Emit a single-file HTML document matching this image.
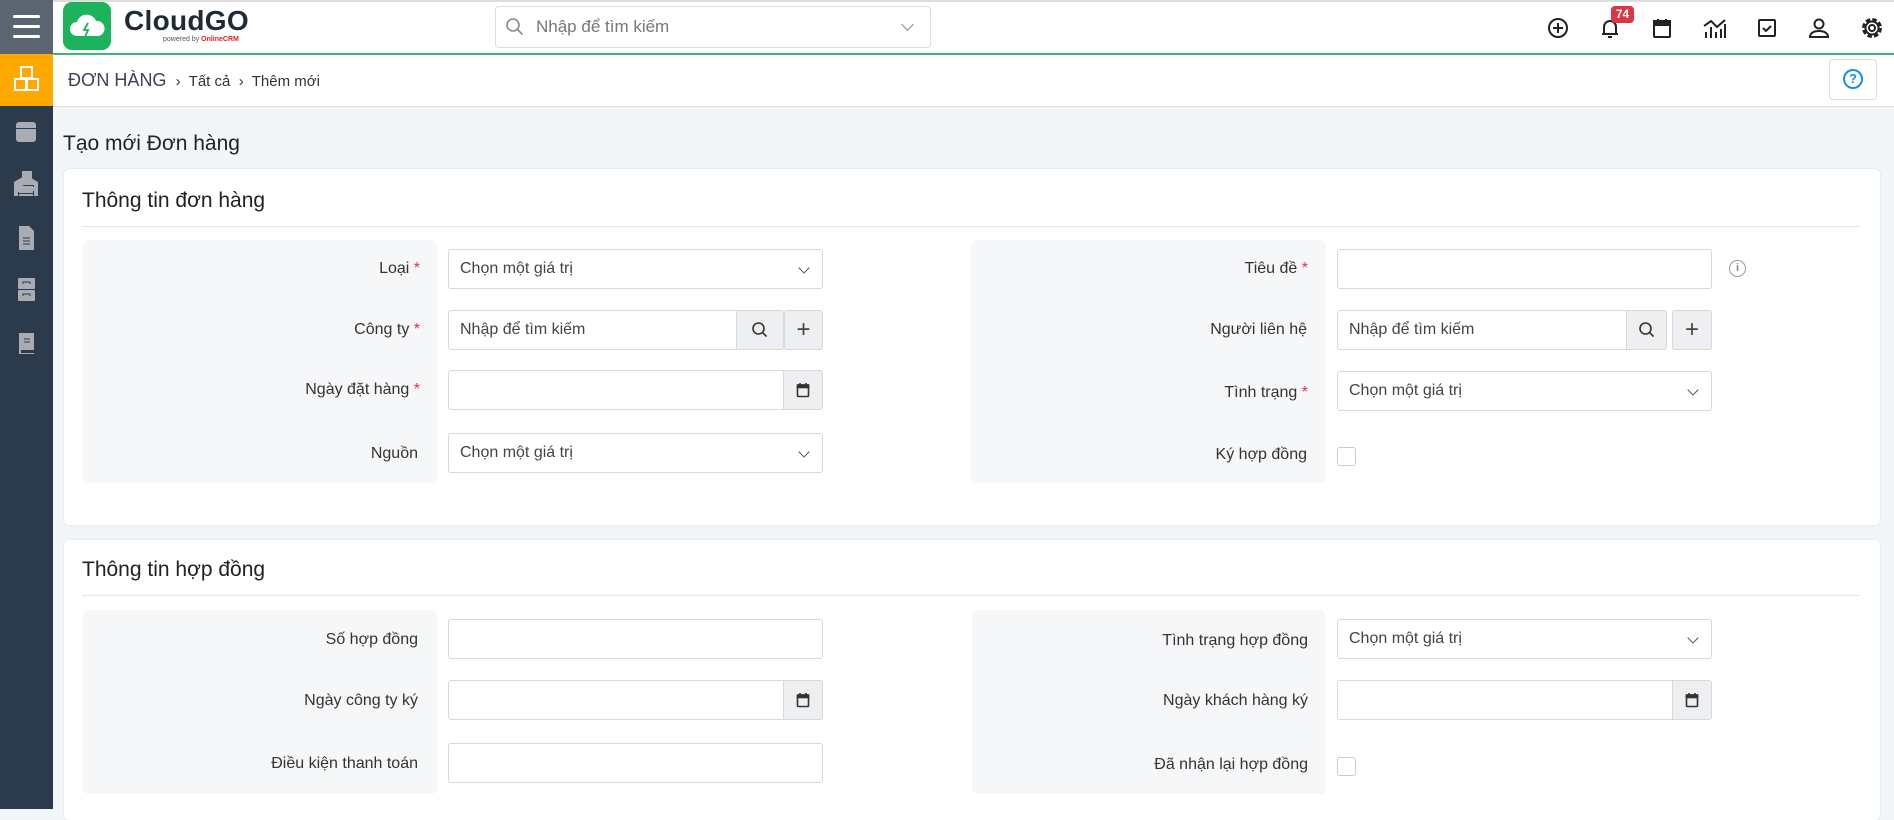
<!DOCTYPE html>
<html><head><meta charset="utf-8"><style>
*{box-sizing:border-box;margin:0;padding:0}
body{width:1894px;height:809px;overflow:hidden;background:#f3f6f9;font-family:"Liberation Sans",sans-serif;color:#333;position:relative}
.abs{position:absolute}
.side{left:0;top:0;width:53px;height:809px;background:#2c3b4b}
.topbar{left:53px;top:0;width:1841px;height:55px;background:#fff;border-top:2px solid #ddd;border-bottom:2px solid #3cb878}
.crumb{left:53px;top:55px;width:1841px;height:52px;background:#fff;border-bottom:1px solid #ddd}
.card{background:#fff;border-radius:5px;box-shadow:0 0 2px rgba(0,0,0,.12)}
.panel{background:#f6f7f9;border-radius:6px}
.lbl{font-size:16px;color:#333;text-align:right;width:300px}
.lbl i{color:#e0334a;font-style:normal}
.inp{border:1px solid #d6d9dd;border-radius:3px;background:#fff;height:40px;font-size:16px;color:#444;padding:0 11px;line-height:38px}
.addon{background:#eeeff1;border:1px solid #d6d9dd;height:40px;display:flex;align-items:center;justify-content:center}
.chev{position:absolute;right:14px;top:14px;width:8px;height:8px;border-right:1.5px solid #555;border-bottom:1.5px solid #555;transform:rotate(45deg)}
.sico{position:absolute;left:13px;width:26px;height:26px}
</style></head><body>
<div class="abs side"></div>
<div class="abs" style="left:0;top:0;width:53px;height:54px;background:#5a6571"></div>
<div class="abs" style="left:13px;top:15px;width:27px;height:3px;background:#fff;border-radius:2px"></div>
<div class="abs" style="left:13px;top:25px;width:27px;height:3px;background:#fff;border-radius:2px"></div>
<div class="abs" style="left:13px;top:35px;width:27px;height:3px;background:#fff;border-radius:2px"></div>
<div class="abs" style="left:0;top:54px;width:53px;height:52px;background:#ffa800"></div>
<svg class="abs" style="left:11px;top:64px" width="32" height="32" viewBox="0 0 32 32" fill="none" stroke="#fff" stroke-width="2"><rect x="10" y="3" width="11" height="11"/><rect x="4" y="15" width="11" height="11"/><rect x="16" y="15" width="11" height="11"/></svg>
<svg class="sico" style="top:119px" viewBox="0 0 26 26"><rect x="3" y="3" width="20" height="20" rx="3" fill="#a9acb2"/><rect x="3" y="9" width="20" height="1" fill="#2c3b4b"/></svg>
<svg class="sico" style="top:169px" viewBox="0 0 26 26"><rect x="9" y="2" width="10" height="10" fill="#a9acb2"/><path d="M2 16h7l4 2h7l5-3v3l-6 5H2z" fill="#a9acb2"/></svg>
<svg class="sico" style="top:172px" viewBox="0 0 26 26"><path d="M1 10l12-7 12 7v14h-4V13H5v11H1z" fill="#a9acb2"/><rect x="6" y="14" width="14" height="3" fill="#a9acb2"/><rect x="6" y="18" width="14" height="3" fill="#a9acb2"/><rect x="6" y="22" width="14" height="2" fill="#a9acb2"/></svg>
<svg class="sico" style="top:225px" viewBox="0 0 26 26"><path d="M6 1h10l5 5v19H6z" fill="#a9acb2"/><path d="M10 13h7M10 16h7M10 19h7" stroke="#2c3b4b"/></svg>
<svg class="sico" style="top:277px" viewBox="0 0 26 26"><rect x="5" y="1" width="17" height="11" rx="1" fill="#a9acb2"/><rect x="5" y="13" width="17" height="11" rx="1" fill="#a9acb2"/><path d="M10 7V5h7v2M10 19v-2h7v2" stroke="#2c3b4b" fill="none"/></svg>
<svg class="sico" style="top:330px" viewBox="0 0 26 26"><path d="M6 3h15v17H8v3h13v1H6z" fill="#a9acb2"/><path d="M11 9h6M11 12h6" stroke="#2c3b4b"/></svg>

<div class="abs topbar"></div>
<div class="abs" style="left:63px;top:2px;width:48px;height:48px;background:#1db35c;border-radius:9px"></div>
<svg class="abs" style="left:68px;top:12px" width="38" height="28" viewBox="0 0 38 28"><path d="M9 24a7 7 0 0 1 0-14a10 10 0 0 1 19-1a7 7 0 0 1 2 15z" fill="#fff"/><path d="M20 11l-4 7h4l-3 7" stroke="#1db35c" stroke-width="1.8" fill="none"/></svg>
<div class="abs" style="left:124px;top:5px;font-size:28px;font-weight:bold;color:#1f2a37;letter-spacing:0.3px">CloudGO</div>
<div class="abs" style="left:163px;top:36px;font-size:7px;color:#555">powered by <b style="color:#d22">OnlineCRM</b></div>
<div class="abs" style="left:495px;top:6px;width:436px;height:42px;border:1px solid #ddd;border-radius:4px;background:#fff"></div>
<svg class="abs" style="left:505px;top:17px" width="20" height="20" viewBox="0 0 20 20" fill="none" stroke="#888" stroke-width="1.6"><circle cx="8" cy="8" r="6"/><path d="M12.5 12.5l5 5"/></svg>
<div class="abs" style="left:536px;top:17px;font-size:17px;color:#777">Nhập để tìm kiếm</div>
<div class="abs" style="left:903px;top:20px;width:9px;height:9px;border-right:1.6px solid #888;border-bottom:1.6px solid #888;transform:rotate(45deg)"></div>
<svg class="abs" style="left:1546px;top:16px" width="24" height="24" viewBox="0 0 24 24" fill="none" stroke="#222" stroke-width="2"><circle cx="12" cy="12" r="9"/><path d="M12 7v10M7 12h10"/></svg>
<svg class="abs" style="left:1598px;top:16px" width="24" height="24" viewBox="0 0 24 24" fill="none" stroke="#222" stroke-width="2"><path d="M6 18V11a6 6 0 0 1 12 0v7H4h16M10 21h4"/></svg>
<div class="abs" style="left:1611px;top:6px;width:23px;height:17px;background:#dc3545;color:#fff;border-radius:4px;font-size:12px;font-weight:bold;text-align:center;line-height:17px">74</div>
<svg class="abs" style="left:1650px;top:16px" width="24" height="24" viewBox="0 0 24 24" fill="none" stroke="#222" stroke-width="2"><rect x="4" y="5" width="16" height="16" rx="1"/><rect x="4" y="5" width="16" height="4" fill="#222"/><path d="M8 3v3M16 3v3"/></svg>
<svg class="abs" style="left:1702px;top:16px" width="26" height="24" viewBox="0 0 26 24" fill="none" stroke="#222" stroke-width="2"><path d="M2 10l7-5 6 6 8-7M4 22v-6M9 22V11M14 22v-6M19 22V13M23 22V8"/></svg>
<svg class="abs" style="left:1755px;top:16px" width="24" height="24" viewBox="0 0 24 24" fill="none" stroke="#222" stroke-width="2"><rect x="4" y="4" width="16" height="16" rx="1"/><path d="M8 12l3 3 5-5"/></svg>
<svg class="abs" style="left:1807px;top:16px" width="24" height="24" viewBox="0 0 24 24" fill="none" stroke="#222" stroke-width="2"><circle cx="12" cy="8" r="4.5"/><path d="M3 21c0-4 4-6 9-6s9 2 9 6z"/></svg>
<svg class="abs" style="left:1860px;top:16px" width="24" height="24" viewBox="0 0 24 24" fill="none" stroke="#222"><circle cx="12" cy="12" r="8" stroke-width="4" stroke-dasharray="4.2 2.1"/><circle cx="12" cy="12" r="6.5" stroke-width="2" fill="#fff"/><circle cx="12" cy="12" r="3" stroke-width="2"/></svg>

<div class="abs crumb"></div>
<div class="abs" style="left:68px;top:70px;font-size:18px;color:#3a4452">ĐƠN HÀNG <span style="font-size:15px;color:#333">&nbsp;›&nbsp; Tất cả &nbsp;›&nbsp; Thêm mới</span></div>
<div class="abs" style="left:1829px;top:59px;width:48px;height:41px;border:1px solid #ddd;border-radius:4px;background:#fff"></div>
<div class="abs" style="left:1843px;top:69px;width:20px;height:20px;border:2px solid #1d8fe0;border-radius:50%;color:#1d8fe0;font-size:13px;font-weight:bold;text-align:center;line-height:16px">?</div>

<div class="abs" style="left:63px;top:132px;font-size:21px;color:#222">Tạo mới Đơn hàng</div>

<div class="abs card" style="left:64px;top:169px;width:1816px;height:356px"></div>
<div class="abs" style="left:82px;top:189px;font-size:21px;color:#222">Thông tin đơn hàng</div>
<div class="abs" style="left:82px;top:226px;width:1778px;height:1px;background:#e6e6e6"></div>
<div class="abs panel" style="left:83px;top:240px;width:354px;height:243px"></div>
<div class="abs panel" style="left:971px;top:240px;width:355px;height:243px"></div>

<div class="abs card" style="left:64px;top:540px;width:1816px;height:280px"></div>
<div class="abs" style="left:82px;top:558px;font-size:21px;color:#222">Thông tin hợp đồng</div>
<div class="abs" style="left:82px;top:595px;width:1778px;height:1px;background:#e6e6e6"></div>
<div class="abs panel" style="left:83px;top:610px;width:354px;height:184px"></div>
<div class="abs panel" style="left:972px;top:610px;width:354px;height:184px"></div>

<div class="abs lbl" style="left:120px;top:260px">Loại <i>*</i></div>
<div class="abs lbl" style="left:120px;top:321px">Công ty <i>*</i></div>
<div class="abs lbl" style="left:120px;top:381px">Ngày đặt hàng <i>*</i></div>
<div class="abs lbl" style="left:118px;top:445px">Nguồn</div>
<div class="abs inp" style="left:448px;top:249px;width:375px">Chọn một giá trị<span class="chev"></span></div>
<div class="abs inp" style="left:448px;top:310px;width:290px;border-radius:3px 0 0 3px">Nhập để tìm kiếm</div>
<div class="abs addon" style="left:736px;top:310px;width:48px;border-radius:0 3px 3px 0"><svg width="18" height="18" viewBox="0 0 18 18" fill="none" stroke="#333" stroke-width="1.6"><circle cx="7.5" cy="7.5" r="5.5"/><path d="M11.5 11.5l4 4"/></svg></div>
<div class="abs addon" style="left:784px;top:310px;width:39px;border-radius:3px;font-size:24px;color:#444">+</div>
<div class="abs inp" style="left:448px;top:370px;width:336px;border-radius:3px 0 0 3px"></div>
<div class="abs addon" style="left:783px;top:370px;width:40px;border-radius:0 3px 3px 0"><svg width="14" height="16" viewBox="0 0 14 16" fill="none" stroke="#333" stroke-width="1.6"><rect x="1.5" y="3" width="11" height="11.5" rx="1"/><rect x="1.5" y="3" width="11" height="2.5" fill="#333"/><path d="M4 1v3M10 1v3"/></svg></div>
<div class="abs inp" style="left:448px;top:433px;width:375px">Chọn một giá trị<span class="chev"></span></div>

<div class="abs lbl" style="left:1008px;top:260px">Tiêu đề <i>*</i></div>
<div class="abs lbl" style="left:1007px;top:321px">Người liên hệ</div>
<div class="abs lbl" style="left:1008px;top:384px">Tình trạng <i>*</i></div>
<div class="abs lbl" style="left:1007px;top:446px">Ký hợp đồng</div>
<div class="abs inp" style="left:1337px;top:249px;width:375px"></div>
<div class="abs" style="left:1729px;top:260px;width:17px;height:17px;border:1.5px solid #999;border-radius:50%;font-size:11px;color:#888;text-align:center;line-height:14px;font-weight:bold">i</div>
<div class="abs inp" style="left:1337px;top:310px;width:291px;border-radius:3px 0 0 3px">Nhập để tìm kiếm</div>
<div class="abs addon" style="left:1626px;top:310px;width:41px;border-radius:0 3px 3px 0"><svg width="18" height="18" viewBox="0 0 18 18" fill="none" stroke="#333" stroke-width="1.6"><circle cx="7.5" cy="7.5" r="5.5"/><path d="M11.5 11.5l4 4"/></svg></div>
<div class="abs addon" style="left:1672px;top:310px;width:40px;border-radius:3px;font-size:24px;color:#444">+</div>
<div class="abs inp" style="left:1337px;top:371px;width:375px">Chọn một giá trị<span class="chev"></span></div>
<div class="abs" style="left:1337px;top:447px;width:19px;height:19px;border:1px solid #ccc;border-radius:3px;background:#fff"></div>

<div class="abs lbl" style="left:118px;top:631px">Số hợp đồng</div>
<div class="abs lbl" style="left:118px;top:692px">Ngày công ty ký</div>
<div class="abs lbl" style="left:118px;top:755px">Điều kiện thanh toán</div>
<div class="abs inp" style="left:448px;top:619px;width:375px"></div>
<div class="abs inp" style="left:448px;top:680px;width:336px;border-radius:3px 0 0 3px"></div>
<div class="abs addon" style="left:783px;top:680px;width:40px;border-radius:0 3px 3px 0"><svg width="14" height="16" viewBox="0 0 14 16" fill="none" stroke="#333" stroke-width="1.6"><rect x="1.5" y="3" width="11" height="11.5" rx="1"/><rect x="1.5" y="3" width="11" height="2.5" fill="#333"/><path d="M4 1v3M10 1v3"/></svg></div>
<div class="abs inp" style="left:448px;top:743px;width:375px"></div>

<div class="abs lbl" style="left:1008px;top:632px">Tình trạng hợp đồng</div>
<div class="abs lbl" style="left:1008px;top:692px">Ngày khách hàng ký</div>
<div class="abs lbl" style="left:1008px;top:756px">Đã nhận lại hợp đồng</div>
<div class="abs inp" style="left:1337px;top:619px;width:375px">Chọn một giá trị<span class="chev"></span></div>
<div class="abs inp" style="left:1337px;top:680px;width:336px;border-radius:3px 0 0 3px"></div>
<div class="abs addon" style="left:1672px;top:680px;width:40px;border-radius:0 3px 3px 0"><svg width="14" height="16" viewBox="0 0 14 16" fill="none" stroke="#333" stroke-width="1.6"><rect x="1.5" y="3" width="11" height="11.5" rx="1"/><rect x="1.5" y="3" width="11" height="2.5" fill="#333"/><path d="M4 1v3M10 1v3"/></svg></div>
<div class="abs" style="left:1337px;top:757px;width:19px;height:19px;border:1px solid #ccc;border-radius:3px;background:#fff"></div>
</body></html>
